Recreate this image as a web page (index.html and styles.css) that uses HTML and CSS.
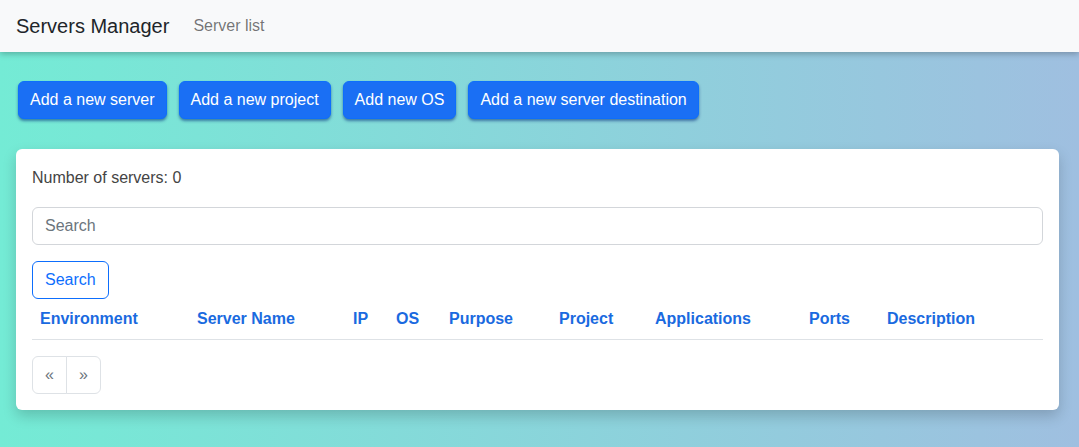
FILE: index.html
```html
<!DOCTYPE html>
<html lang="en">
<head>
<meta charset="utf-8">
<title>Servers Manager</title>
<link rel="stylesheet" href="styles.css">
</head>
<body>
<nav class="navbar">
  <span class="brand">Servers Manager</span>
  <a class="nav-link" href="#">Server list</a>
</nav>
<main class="page">
  <div class="actions">
    <button class="btn btn-primary">Add a new server</button>
    <button class="btn btn-primary">Add a new project</button>
    <button class="btn btn-primary">Add new OS</button>
    <button class="btn btn-primary">Add a new server destination</button>
  </div>
  <section class="card">
    <p class="count">Number of servers: 0</p>
    <input class="search-input" type="text" placeholder="Search">
    <button class="btn btn-outline">Search</button>
    <table class="servers">
      <thead>
        <tr>
          <th class="c-env">Environment</th>
          <th class="c-name">Server Name</th>
          <th class="c-ip">IP</th>
          <th class="c-os">OS</th>
          <th class="c-purpose">Purpose</th>
          <th class="c-project">Project</th>
          <th class="c-apps">Applications</th>
          <th class="c-ports">Ports</th>
          <th class="c-desc">Description</th>
        </tr>
      </thead>
      <tbody></tbody>
    </table>
    <ul class="pagination">
      <li class="page-item"><span class="page-link">&laquo;</span></li>
      <li class="page-item"><span class="page-link">&raquo;</span></li>
    </ul>
  </section>
</main>
</body>
</html>
```
FILE: styles.css
```css
* { box-sizing: border-box; }
html, body { height: 100%; }
body {
  margin: 0;
  font-family: "Liberation Sans", Arial, sans-serif;
  font-size: 16px;
  line-height: 1.5;
  color: #212529;
  background: linear-gradient(90deg, #74ebd5 0%, #9fbfe0 100%);
  min-height: 100%;
}
.navbar {
  height: 52px;
  background: #f8f9fa;
  display: flex;
  align-items: center;
  padding: 0 16px;
  box-shadow: 0 2px 6px rgba(0,0,0,0.25);
  position: relative;
}
.brand {
  font-size: 20px;
  color: #212529;
  margin-right: 24px;
}
.nav-link {
  color: rgba(0,0,0,0.55);
  text-decoration: none;
  font-size: 16px;
}
.page {
  padding: 29px 20px 16px 16px;
}
.actions {
  display: flex;
  gap: 12px;
  margin-left: 2px;
  margin-bottom: 30px;
}
.btn {
  font-family: inherit;
  font-size: 16px;
  line-height: 24px;
  padding: 6px 11px;
  border-radius: 6px;
  border: 1px solid transparent;
  cursor: pointer;
}
.btn-primary {
  background: #1a6ff4;
  border-color: #0d6efd;
  color: #fff;
  box-shadow: 0 2px 3px rgba(0,40,120,0.55);
}
.btn-outline {
  padding: 6px 12px;
  background: transparent;
  border-color: #0d6efd;
  color: #0d6efd;
}
.card {
  background: #fff;
  border-radius: 6px;
  padding: 16px;
  box-shadow: 0 6px 14px rgba(0,0,0,0.18);
}
.count {
  margin: 1px 0 17px;
  color: #444;
}
.search-input {
  display: block;
  width: 100%;
  height: 38px;
  padding: 6px 12px;
  font-family: inherit;
  font-size: 16px;
  border: 1px solid #d3d6da;
  border-radius: 6px;
  margin-bottom: 16px;
  color: #212529;
}
.search-input::placeholder { color: #6c757d; }
.servers {
  width: 100%;
  border-collapse: collapse;
  table-layout: fixed;
}
.servers th {
  text-align: left;
  padding: 8px;
  font-weight: bold;
  color: #1a6ae0;
  border-bottom: 1px solid #dee2e6;
  white-space: nowrap;
}
.c-env { width: 157px; }
.c-name { width: 156px; }
.c-ip { width: 43px; }
.c-os { width: 53px; }
.c-purpose { width: 110px; }
.c-project { width: 96px; }
.c-apps { width: 154px; }
.c-ports { width: 78px; }
.pagination {
  display: flex;
  list-style: none;
  margin: 16px 0 0;
  padding: 0;
}
.page-link {
  display: block;
  padding: 6px 12px;
  border: 1px solid #dee2e6;
  color: #6c757d;
  font-size: 16px;
  line-height: 24px;
}
.page-item:first-child .page-link {
  border-radius: 6px 0 0 6px;
}
.page-item + .page-item .page-link {
  margin-left: -1px;
  border-radius: 0 6px 6px 0;
}
```
